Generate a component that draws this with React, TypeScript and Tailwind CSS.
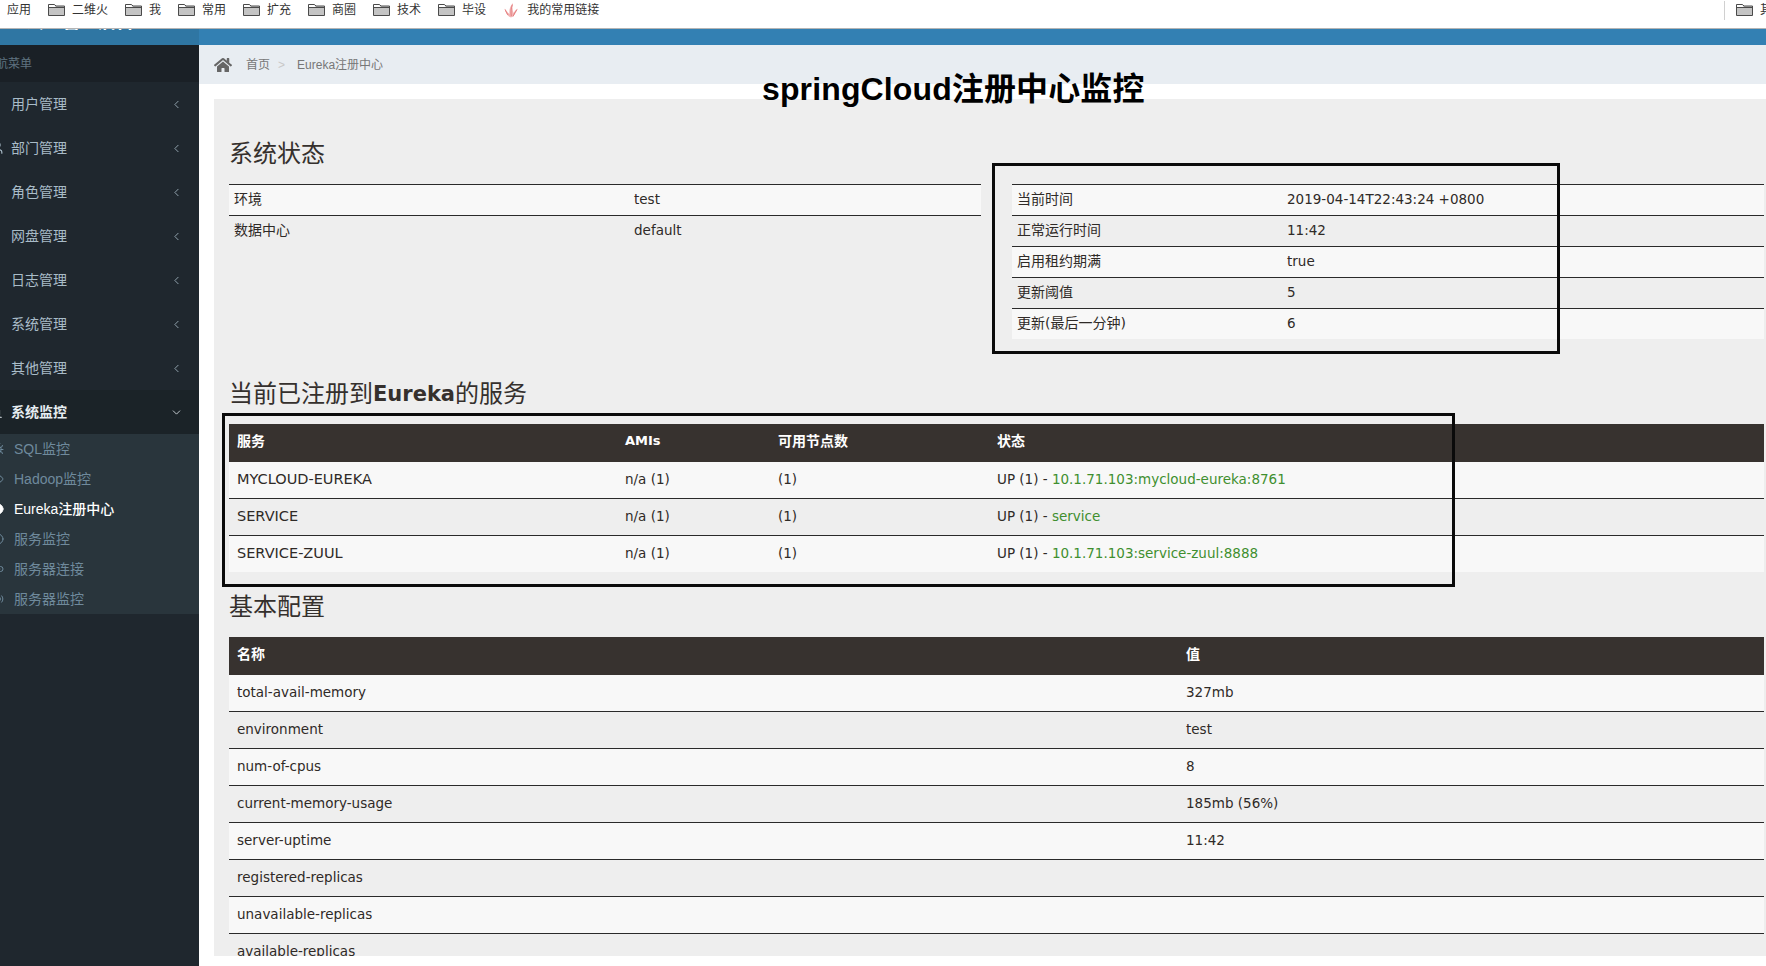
import React from 'react';
import { ChevronLeft, ChevronDown, Users, BarChart3, Bug, Eye, Circle, Link2, Volume2 } from 'lucide-react';
import { FaHome } from 'react-icons/fa';

const bookmarks = ['二维火', '我', '常用', '扩充', '商圈', '技术', '毕设'];

const menus = ['用户管理', '部门管理', '角色管理', '网盘管理', '日志管理', '系统管理', '其他管理'];

const subMenus = [
  { name: 'SQL监控', icon: Bug },
  { name: 'Hadoop监控', icon: Eye },
  { name: 'Eureka注册中心', icon: Circle, active: true },
  { name: '服务监控', icon: Circle },
  { name: '服务器连接', icon: Link2 },
  { name: '服务器监控', icon: Volume2 },
];

const envRows = [
  ['环境', 'test'],
  ['数据中心', 'default'],
];

const statusRows = [
  ['当前时间', '2019-04-14T22:43:24 +0800'],
  ['正常运行时间', '11:42'],
  ['启用租约期满', 'true'],
  ['更新阈值', '5'],
  ['更新(最后一分钟)', '6'],
];

const services = [
  { name: 'MYCLOUD-EUREKA', link: '10.1.71.103:mycloud-eureka:8761' },
  { name: 'SERVICE', link: 'service' },
  { name: 'SERVICE-ZUUL', link: '10.1.71.103:service-zuul:8888' },
];

const configRows = [
  ['total-avail-memory', '327mb'],
  ['environment', 'test'],
  ['num-of-cpus', '8'],
  ['current-memory-usage', '185mb (56%)'],
  ['server-uptime', '11:42'],
  ['registered-replicas', ''],
  ['unavailable-replicas', ''],
  ['available-replicas', ''],
];

const FolderIcon = () => (
  <svg width="17" height="14" viewBox="0 0 17 14" className="shrink-0">
    <path d="M0.5 12.5V1.5H6.5L8 3H16.5V12.5Z" fill="#c4c4c4" stroke="#4a4a4a" />
    <path d="M1 4.5H16" stroke="#4a4a4a" />
    <path d="M1 2H6.2L7.6 4H1Z" fill="#fff" />
  </svg>
);

const FireIcon = () => (
  <svg width="17" height="17" viewBox="0 0 17 17" fill="none" className="shrink-0">
    <path d="M8 15.5C4.5 14.5 2.5 11 1.5 6.5C3.5 9 5 11 6.5 12C6 8 7 4 10 1C9 5 9.5 8 10.5 11C11.5 9.5 12.5 8 14.5 6.5C13.5 10 12 13.5 8 15.5Z" fill="#f2b3b3" />
    <path d="M5 13C3.6 11 2.8 9 2.2 7.5M8.3 14C7.7 10 8 6 9.4 2.6M10 14.5C11 12 12.5 9.5 14 7.5" stroke="#e57f80" strokeWidth="1" />
  </svg>
);

const rowBg = (i: number) => (i % 2 === 0 ? 'bg-[#f8f8f8]' : 'bg-[#eeeeee]');

const InfoTable = ({ rows, firstCol }: { rows: string[][]; firstCol: string }) => (
  <table className="w-full table-fixed border-separate border-spacing-0">
    <colgroup>
      <col className={firstCol} />
      <col />
    </colgroup>
    <tbody>
      {rows.map((row, i) => (
        <tr key={row[0]} className={rowBg(i)}>
          <td className="h-[31px] border-t border-[#2a2a2a] pb-[2px] pl-[5px]">{row[0]}</td>
          <td className="h-[31px] border-t border-[#2a2a2a] pl-[5px] text-[13.5px]">{row[1]}</td>
        </tr>
      ))}
    </tbody>
  </table>
);

const HeadCell = ({ className = '', children }: { className?: string; children: React.ReactNode }) => (
  <th className={`h-[38px] bg-[#37322f] pb-[4px] pl-2 text-left font-bold text-white ${className}`}>{children}</th>
);

const BodyCell = ({ first, className = '', children }: { first: boolean; className?: string; children?: React.ReactNode }) => (
  <td className={`${first ? 'h-[36px]' : 'h-[37px] border-t border-[#2a2a2a]'} pl-2 ${className}`}>{children}</td>
);

const Heading = ({ className, children }: { className: string; children: React.ReactNode }) => (
  <h2 className={`flex h-[34px] items-center pt-[2px] text-2xl leading-none text-[#35302d] ${className}`}>{children}</h2>
);

export default function App() {
  return (
    <div className="relative flex h-[966px] w-[1766px] flex-col overflow-hidden bg-white font-['DejaVu_Sans','Noto_Sans_CJK_SC',sans-serif] text-sm text-[#2f2a27]">
      {/* browser bookmarks */}
      <div className="flex h-[29px] shrink-0 items-center gap-[17px] border-b border-[#b4b4b4] bg-white pb-[8px] pl-[7px] font-['Liberation_Sans','Noto_Sans_CJK_SC',sans-serif] text-xs text-[#333333]">
        <span>应用</span>
        {bookmarks.map((name) => (
          <div key={name} className="flex shrink-0 items-center gap-[7px]">
            <FolderIcon />
            <span>{name}</span>
          </div>
        ))}
        <div className="flex shrink-0 items-center gap-[7px]">
          <FireIcon />
          <span>我的常用链接</span>
        </div>
        <div className="ml-auto flex h-[19px] w-[42px] shrink-0 items-center gap-[7px] overflow-hidden border-l border-[#d0d0d0] pl-[11px]">
          <FolderIcon />
          <span className="shrink-0">其他书签</span>
        </div>
      </div>

      {/* top bar, cut off by the screenshot */}
      <div className="flex h-[16px] shrink-0 bg-[#3380b3]">
        <div className="h-full w-[199px] overflow-hidden bg-[#2f76a3] pl-[26px]">
          <div className="-mt-[17px] text-lg font-bold leading-[19px] whitespace-nowrap text-white">云盘管理后台</div>
        </div>
      </div>

      <div className="flex min-h-0 flex-1">
        {/* sidebar */}
        <aside className="w-[199px] shrink-0 overflow-hidden bg-[#1f272e] font-['Liberation_Sans','Noto_Sans_CJK_SC',sans-serif] text-[#a9bcc8]">
          <div className="-ml-[16px] flex h-[37px] items-center whitespace-nowrap bg-[#1a2026] pl-0 text-xs text-[#5f7380]">导航菜单</div>
          {menus.map((name, i) => (
            <div key={name} className="flex h-[44px] items-center pr-[16px]">
              {i === 1 ? <Users size={14} className="-ml-[11px] mr-2 shrink-0" /> : <span className="w-[11px] shrink-0" />}
              <span>{name}</span>
              <ChevronLeft size={13} strokeWidth={1.5} className="ml-auto" />
            </div>
          ))}
          <div className="flex h-[44px] items-center bg-[#1b2328] pr-[16px] font-bold text-[#e6edf1]">
            <BarChart3 size={14} className="-ml-[11px] mr-2 shrink-0" />
            <span>系统监控</span>
            <ChevronDown size={13} strokeWidth={1.5} className="ml-auto" />
          </div>
          <div className="bg-[#29353c] text-[#6f8a9c]">
            {subMenus.map(({ name, icon: Icon, active }) => (
              <div key={name} className={`flex h-[30px] items-center ${active ? 'font-medium text-white' : ''}`}>
                <Icon size={12} fill={active ? 'currentColor' : 'none'} className="-ml-[8px] mr-[10px] shrink-0" />
                <span>{name}</span>
              </div>
            ))}
          </div>
        </aside>

        <main className="min-w-0 flex-1">
          {/* breadcrumb */}
          <div className="flex h-[39px] items-center bg-[#e8edf2] pl-[15px] font-['Liberation_Sans','Noto_Sans_CJK_SC',sans-serif] text-xs text-[#777777]">
            <FaHome size={18} className="text-[#666666]" />
            <span className="ml-[14px]">首页</span>
            <span className="ml-2 text-[#c8c8c8]">&gt;</span>
            <span className="ml-[12px]">Eureka注册中心</span>
          </div>

          {/* eureka page */}
          <div className="ml-[15px] mt-[15px] h-[857px] overflow-hidden bg-[#eeeeee] pl-[15px] pr-[2px]">
            <div className="grid grid-cols-[752px_752px] gap-[31px]">
              <div>
                <Heading className="mb-[14px] mt-[37px]">系统状态</Heading>
                <InfoTable rows={envRows} firstCol="w-[400px]" />
              </div>
              <div className="pt-[85px]">
                <InfoTable rows={statusRows} firstCol="w-[270px]" />
              </div>
            </div>

            <Heading className="mb-[14px] mt-[37px]">
              当前已注册到<span className="text-[21px] font-bold">Eureka</span>的服务
            </Heading>
            <table className="w-full table-fixed border-separate border-spacing-0">
              <colgroup>
                <col className="w-[388px]" />
                <col className="w-[153px]" />
                <col className="w-[219px]" />
                <col />
              </colgroup>
              <thead>
                <tr>
                  <HeadCell>服务</HeadCell>
                  <HeadCell className="text-[13px]">AMIs</HeadCell>
                  <HeadCell>可用节点数</HeadCell>
                  <HeadCell>状态</HeadCell>
                </tr>
              </thead>
              <tbody>
                {services.map((s, i) => (
                  <tr key={s.name} className={rowBg(i)}>
                    <BodyCell first={i === 0} className="pb-[2px] text-[14.5px]">{s.name}</BodyCell>
                    <BodyCell first={i === 0} className="text-[13.5px]">n/a (1)</BodyCell>
                    <BodyCell first={i === 0} className="text-[13.5px]">(1)</BodyCell>
                    <BodyCell first={i === 0} className="text-[13.5px]">
                      UP (1) - <a className="text-[#3f8f2f]">{s.link}</a>
                    </BodyCell>
                  </tr>
                ))}
              </tbody>
            </table>

            <Heading className="mb-[14px] mt-[17px]">基本配置</Heading>
            <table className="w-full table-fixed border-separate border-spacing-0">
              <colgroup>
                <col className="w-[949px]" />
                <col />
              </colgroup>
              <thead>
                <tr>
                  <HeadCell>名称</HeadCell>
                  <HeadCell>值</HeadCell>
                </tr>
              </thead>
              <tbody>
                {configRows.map((row, i) => (
                  <tr key={row[0]} className={rowBg(i)}>
                    <BodyCell first={i === 0} className="text-[13.5px]">{row[0]}</BodyCell>
                    <BodyCell first={i === 0} className="text-[13.5px]">{row[1]}</BodyCell>
                  </tr>
                ))}
              </tbody>
            </table>
          </div>
        </main>
      </div>

      {/* annotations drawn over the screenshot */}
      <div className="absolute left-[762px] top-[68px] font-['Liberation_Sans','Noto_Sans_CJK_SC',sans-serif] text-[32px] font-bold leading-[42px] tracking-[0.13px] whitespace-nowrap text-black">
        springCloud注册中心监控
      </div>
      <div className="absolute left-[992px] top-[163px] h-[191px] w-[568px] border-[3px] border-[#0a0a0a]" />
      <div className="absolute left-[222px] top-[413px] h-[174px] w-[1233px] border-[3px] border-[#0a0a0a]" />
    </div>
  );
}
